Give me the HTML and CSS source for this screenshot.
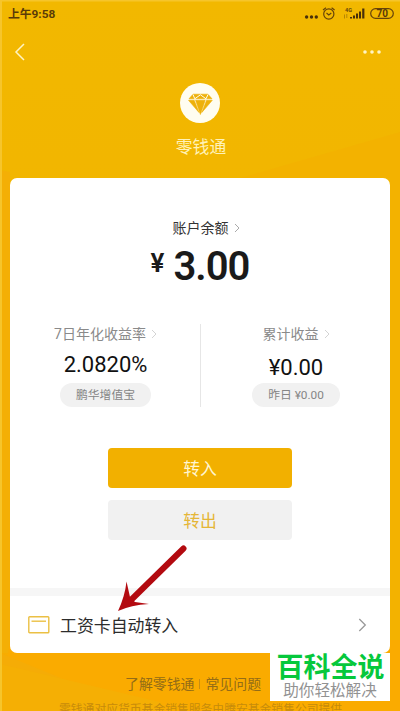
FILE: index.html
```html
<!DOCTYPE html>
<html lang="zh-CN">
<head>
<meta charset="utf-8">
<title>零钱通</title>
<link rel="stylesheet" href="styles.css">
</head>
<body>
<div class="screen">
  <svg class="backdrop" viewBox="0 0 400 711" aria-hidden="true">
    <defs><linearGradient id="g" x1="0" y1="0" x2="0" y2="1"><stop offset="0" stop-color="#f2b800"/><stop offset=".45" stop-color="#f2b400"/><stop offset="1" stop-color="#f8ab00"/></linearGradient></defs>
    <rect width="400" height="711" fill="url(#g)"/>
    <path d="M240 178L400 132V711H390V178Z" fill="#f3b200"/>
    <path d="M0 170L10 172V653H0Z" fill="#f4af05"/>
    <path d="M10 640H400V711H0Z" fill="#faab00"/>
    <path d="M0 653L61 678L0 711Z" fill="#f5ac06"/>
    <path d="M0 664L160 702V711H0Z" fill="#f5af04"/>
    <path d="M0 0H400V1.5H2V711H0Z" fill="#f6c52b"/>
  </svg>
  <header class="status">
    <span class="time">上午9:58</span>
    <svg class="status-icons" width="92" height="20" viewBox="304 4 92 20" fill="none" stroke="#66430a">
      <g fill="#49300a" stroke="none"><circle cx="306.6" cy="17" r="1.7"/><circle cx="311.5" cy="17" r="1.7"/><circle cx="316.3" cy="17" r="1.7"/>
      <path d="M350 18.5V17h2v1.5zM353 18.5V15.5h2v3zM356 18.5V13.5h2v5zM359 18.5V11.5h2v7zM362.2 18.5V8.5h2.2v10z"/></g>
      <circle cx="328.8" cy="14" r="5.1" stroke-width="1.2"/><path d="M326.5 13l2.3 2 2.5-2M323 10l3-2.3M331.6 7.7l3 2.3" stroke-width="1.2"/>
      <path d="M344.5 14.5v4M346.8 14v4" stroke-width=".7" opacity=".6"/>
      <text x="345" y="12" class="net">4G</text>
      <rect x="370.7" y="8.7" width="22.6" height="9.6" rx="4.8" stroke-width="1.2"/>
      <text x="382.2" y="17.2" text-anchor="middle" class="battery">70</text>
    </svg>
  </header>
  <nav class="nav">
    <svg width="12" height="18" viewBox="0 0 12 18" fill="none" stroke="#fff4c4" stroke-width="1.5"><path d="M10 1L2 9l8 8"/></svg>
    <svg width="20" height="6" viewBox="0 0 20 6" fill="#fff4c4"><circle cx="3" cy="3" r="1.8"/><circle cx="10" cy="3" r="1.8"/><circle cx="17" cy="3" r="1.8"/></svg>
  </nav>
  <section class="brand">
    <svg width="40" height="40" viewBox="0 0 40 40"><circle cx="20" cy="20" r="20" fill="#fffdf0"/>
      <path d="M8.500 17.300H14.200L19 29.500ZM15.600 17.300H25.200L20.400 31.500ZM26.600 17.300H32.300L21.800 29.500Z" fill="#eeb10a" stroke="#eeb10a" stroke-width=".6" stroke-linejoin="round"/>
      <path d="M13 11.200H28L32 15.800H9Z" fill="#eeb10a" stroke="#eeb10a" stroke-width=".6"/>
      <path d="M14.800 15.800L20.400 11.800L26 15.800M13 11.500L14.800 15.800M28 11.500L26 15.800" fill="none" stroke="#fffdf0" stroke-width="1"/></svg>
    <h1>零钱通</h1>
  </section>
  <main class="card">
    <section class="balance">
      <div class="label dark"><span>账户余额</span><svg class="chev" viewBox="0 0 6 10"><path d="M1 1l4 4-4 4"/></svg></div>
      <div class="amount"><span class="yen">¥</span><span class="digits">3.00</span></div>
    </section>
    <section class="stats">
      <div class="stat rate">
        <div class="label"><span>7日年化收益率</span><svg class="chev pale" viewBox="0 0 6 10"><path d="M1 1l4 4-4 4"/></svg></div>
        <div class="value">2.0820%</div>
        <div class="pill">鹏华增值宝</div>
      </div>
      <div class="stat income">
        <div class="label"><span>累计收益</span><svg class="chev pale" viewBox="0 0 6 10"><path d="M1 1l4 4-4 4"/></svg></div>
        <div class="value">¥0.00</div>
        <div class="pill">昨日 ¥0.00</div>
      </div>
    </section>
    <div class="actions">
      <button class="btn primary">转入</button>
      <button class="btn plain">转出</button>
    </div>
    <div class="entry">
      <svg width="22" height="18" viewBox="0 0 22 18" fill="none" stroke="#ebc044" stroke-width="1.4"><rect x=".8" y=".8" width="20" height="16" rx=".8"/><path d="M3.5 5.2H18"/></svg>
      <span>工资卡自动转入</span>
      <svg class="go" width="9" height="14" viewBox="0 0 9 14" fill="none" stroke="#999" stroke-width="1.3"><path d="M1.3 1l6 6-6 6"/></svg>
    </div>
  </main>
  <footer class="footer">
    <div class="links"><span>了解零钱通</span><i></i><span>常见问题</span></div>
    <p>零钱通对应货币基金销售服务由腾安基金销售公司提供</p>
  </footer>
  <svg class="arrow" viewBox="0 0 70 68" aria-hidden="true"><path d="M65.500 3.500L13 55" stroke="#b30a10" stroke-width="6" stroke-linecap="round"/><path d="M0 66Q7 51 8.500 36.500L12 52L17 57L31 59Q13 60 0 66Z" fill="#b30a10"/></svg>
  <aside class="watermark"><strong>百科全说</strong><span>助你轻松解决</span></aside>
</div>
</body>
</html>
```
FILE: styles.css
```css
* { box-sizing: border-box; }
body { margin: 0; font-family: Roboto, "Noto Sans CJK SC", sans-serif; }
.screen { position: relative; width: 400px; height: 711px; overflow: hidden; display: flex; flex-direction: column; }
.backdrop { position: absolute; inset: 0; width: 400px; height: 711px; }
.status, .nav, .brand, .card, .footer { position: relative; flex: none; }
.status { height: 28px; padding: 4px 4px 4px 8px; display: flex; justify-content: space-between; }
.time { font-size: 11.8px; line-height: 20px; font-weight: 700; color: #5a3b08; }
.net { font: 700 5.5px Roboto, sans-serif; fill: #66430a; stroke: none; }
.battery { font: 700 10px Roboto, sans-serif; fill: #5a3b08; stroke: none; }
.nav { height: 47px; padding: 0 18px 0 14px; display: flex; justify-content: space-between; align-items: center; }
.brand { height: 103px; padding-top: 8px; display: flex; flex-direction: column; align-items: center; }
h1 { margin: 12px 0 0 2px; font-size: 16.8px; line-height: 24px; font-weight: 400; color: #fff2b8; }
.card { margin: 0 10px; height: 475px; background: #fff; border-radius: 7px; display: flex; flex-direction: column; }
.balance { height: 146px; padding-top: 40px; display: flex; flex-direction: column; align-items: center; }
.label { height: 20px; display: flex; align-items: center; gap: 5px; font-size: 14px; line-height: 20px; color: #8a8a8a; white-space: nowrap; }
.dark { color: #333; margin-left: 12px; }
.chev { width: 6px; height: 10px; fill: none; stroke: #aaa; stroke-width: 1; overflow: visible; }
.pale { stroke: #d4d4d4; }
.amount { display: flex; align-items: flex-start; color: #1a1a1a; font-weight: 600; line-height: 46px; height: 46px; margin-top: 5px; }
.yen { font-size: 26px; line-height: 40px; margin-right: 9px; }
.digits { font-size: 40px; font-weight: 600; line-height: 47px; letter-spacing: -1px; }
.stats { height: 83px; display: flex; }
.stat { display: flex; flex-direction: column; align-items: center; }
.rate { width: 191px; padding-left: 1px; border-right: 1px solid #e6e6e6; }
.income { width: 189px; padding-left: 1px; }
.value { font-size: 22px; line-height: 26px; height: 38px; padding-top: 8px; color: #111; }
.income .value { padding-top: 11px; }
.pill { height: 24px; margin-top: 1px; padding: 0 16px; border-radius: 12px; background: #f1f1f1; font-size: 11.8px; line-height: 24px; color: #858585; white-space: nowrap; }
.actions { height: 181px; padding-top: 41px; display: flex; flex-direction: column; align-items: center; gap: 12px; }
.btn { width: 184px; height: 40px; padding: 0; border: 0; border-radius: 4px; font: 400 16.8px/40px "Noto Sans CJK SC", sans-serif; }
.primary { background: #f2b000; color: #fff6d2; }
.plain { background: #f1f1f1; color: #e5b637; }
.entry { height: 65px; border-top: 8px solid #f6f6f6; padding: 0 23px 0 18px; display: flex; align-items: center; font-size: 16.9px; color: #2c2c2c; }
.entry span { margin-left: 10px; }
.go { margin-left: auto; }
.footer { height: 58px; padding-top: 21px; color: #936c17; }
.links { display: flex; align-items: center; gap: 5px; margin-left: 125px; font-size: 13.9px; line-height: 20px; }
.links i { width: 1px; height: 10px; background: #c78d12; }
.footer p { margin: 6px 0 0 59px; font-size: 11.8px; line-height: 18px; white-space: nowrap; color: #c78b0b; }
.arrow { position: absolute; left: 118px; top: 545px; width: 70px; height: 68px; }
.watermark { position: absolute; left: 270px; top: 653px; width: 120px; height: 48px; padding-top: 1px; background: #fff; display: flex; flex-direction: column; align-items: center; }
.watermark strong { font-size: 27px; line-height: 28px; font-weight: 600; color: #06c83c; white-space: nowrap; margin-left: 1px; }
.watermark span { font-size: 15.6px; line-height: 19px; color: #929292; }
```
